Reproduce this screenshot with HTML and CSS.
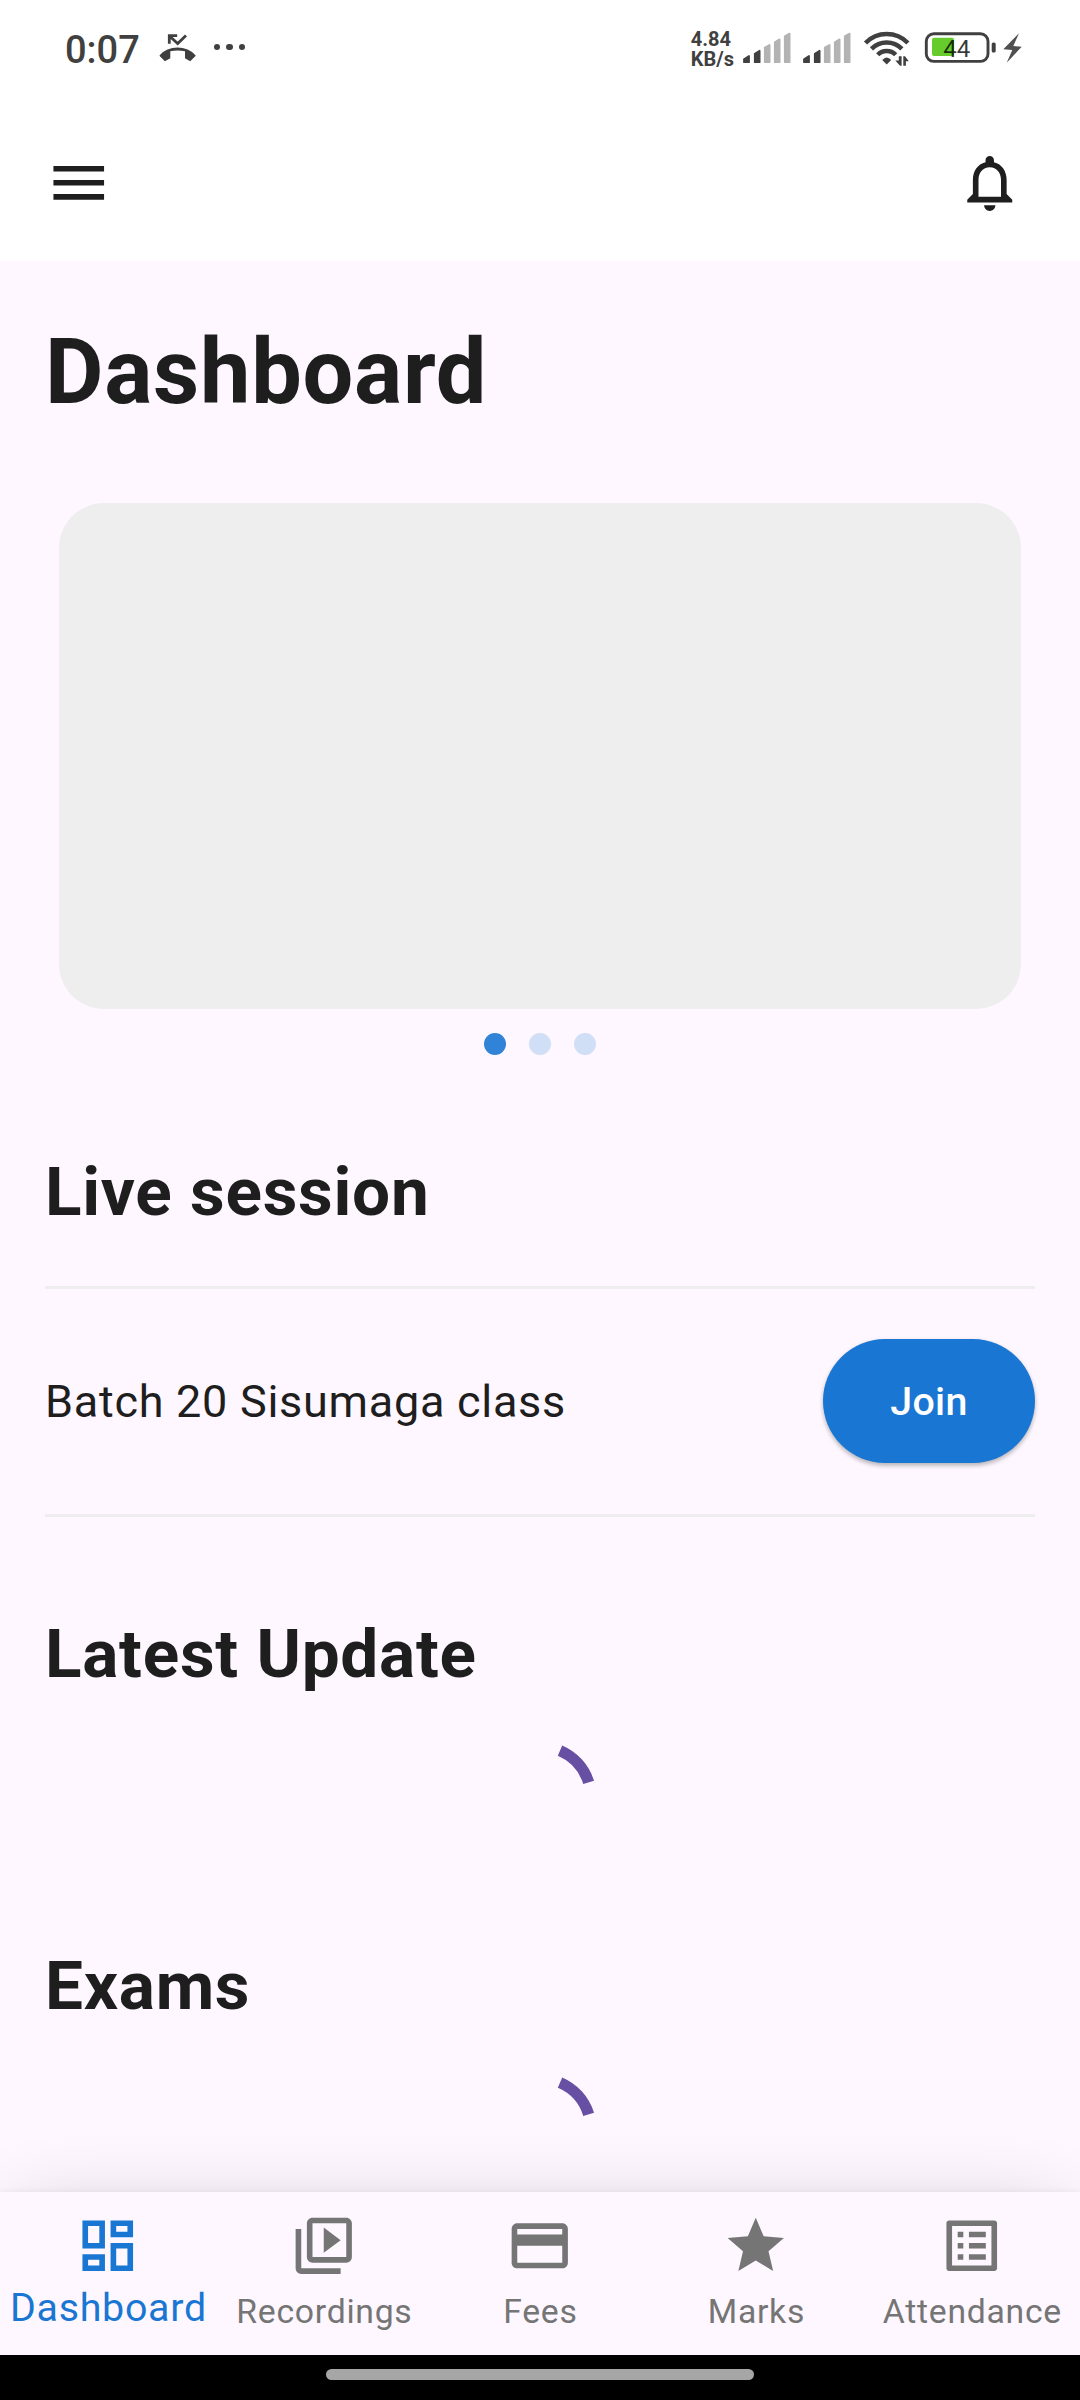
FILE: index.html
```
<!DOCTYPE html>
<html lang="en">
<head>
<meta charset="utf-8">
<title>Dashboard</title>
<link rel="stylesheet" href="styles.css">
</head>
<body>
<div class="screen">
  <header class="header">
    <div class="status">
      <span class="status-time">0:07</span>
      <svg class="status-call" viewBox="0 0 38 29" width="38" height="29"><path d="M.4 22.7C9 11.8 28 11.8 36.8 22.7L31.2 28.3L26 25.3V18.3Q18.5 16.6 11.3 18.3V25.3L5.9 28.3Z"/><path class="line" d="M10.3 10.7V2.7H18.2M11 3.4L18.7 10.6L27 2.5"/></svg>
      <span class="status-more"><i></i><i></i><i></i></span>
      <div class="status-right">
        <span class="status-speed">4.84<br>KB/s</span>
        <svg class="status-signal" viewBox="0 0 48 32" width="48" height="32"><g class="on"><path d="M1 27.2L6 24V30.2H1Z"/><path d="M11.8 21.7L16.6 18.8V30.2H11.8Z"/></g><g class="off"><path d="M21.8 15.6L26.6 13V30.2H21.8Z"/><path d="M31.8 10.2L36.6 7.4V30.2H31.8Z"/><path d="M41.8 4.4L46.6 1.6V30.2H41.8Z"/></g></svg>
        <svg class="status-signal" viewBox="0 0 48 32" width="48" height="32"><g class="on"><path d="M1 27.2L6 24V30.2H1Z"/><path d="M11.8 21.7L16.6 18.8V30.2H11.8Z"/></g><g class="off"><path d="M21.8 15.6L26.6 13V30.2H21.8Z"/><path d="M31.8 10.2L36.6 7.4V30.2H31.8Z"/><path d="M41.8 4.4L46.6 1.6V30.2H41.8Z"/></g></svg>
        <svg class="status-wifi" viewBox="0 0 48 37" width="48" height="37"><g class="arcs"><path d="M2.5 13A29.500 29.500 0 0 1 44.9 13"/><path d="M8.500 18.8A21.500 21.500 0 0 1 38.9 18.8"/><path d="M14.7 24.8A12.600 12.600 0 0 1 32.7 24.8"/></g><path d="M19.2 30Q23.7 24.8 28.2 30L23.7 34.6Z"/><path d="M32.3 30.5H35.8V26.2H38.6V35.8H37ZM40.3 26.2H42L45.8 31.2H42.9V35.8H40.3Z"/></svg>
        <svg class="status-battery" viewBox="0 0 72 35" width="72" height="35"><rect class="shell" x="2.3" y="3.8" width="61.7" height="27.6" rx="7.5"/><rect class="level" x="8" y="7.8" width="22" height="18.2" rx="2"/><rect class="tip" x="67.7" y="12.5" width="4" height="10" rx="1.6"/><text x="19.3" y="27">44</text></svg>
        <svg class="status-bolt" viewBox="0 0 19 30" width="19" height="30"><path d="M16 .3L.3 16.3L9.3 17L3.7 29.7L18.7 13.7L10.3 13Z"/></svg>
      </div>
    </div>
    <div class="appbar">
      <svg class="icon" viewBox="0 0 24 24"><path d="M3 18h18v-2H3v2zm0-5h18v-2H3v2zm0-7v2h18V6H3z"/></svg>
      <svg class="icon" viewBox="0 0 24 24"><path d="M12 22c1.1 0 2-.9 2-2h-4c0 1.1.9 2 2 2zm6-6v-5c0-3.07-1.63-5.64-4.5-6.32V4c0-.83-.67-1.5-1.5-1.5s-1.5.67-1.5 1.5v.68C7.64 5.36 6 7.92 6 11v5l-2 2v1h16v-1l-2-2zm-2 1H8v-6c0-2.48 1.51-4.5 4-4.5s4 2.02 4 4.5v6z"/></svg>
    </div>
  </header>

  <main class="content">
    <h1 class="page-title">Dashboard</h1>
    <div class="banner"></div>
    <div class="dots"><i class="dot active"></i><i class="dot"></i><i class="dot"></i></div>

    <section class="section">
      <h2 class="section-title">Live session</h2>
      <div class="session">
        <span class="session-name">Batch 20 Sisumaga class</span>
        <button class="join">Join</button>
      </div>
    </section>

    <section class="section">
      <h2 class="section-title">Latest Update</h2>
      <svg class="spinner" viewBox="0 0 112.5 112.5"><path d="M76.02 9.67A50.6 50.6 0 0 1 104.64 41.45"/></svg>
    </section>

    <section class="section exams">
      <h2 class="section-title">Exams</h2>
      <svg class="spinner" viewBox="0 0 112.5 112.5"><path d="M76.02 9.67A50.6 50.6 0 0 1 104.64 41.45"/></svg>
    </section>
  </main>

  <nav class="tabs">
    <a class="tab selected"><svg class="icon" viewBox="0 0 24 24"><path d="M19 5v2h-4V5h4M9 5v6H5V5h4m10 8v6h-4v-6h4M9 17v2H5v-2h4M21 3h-8v6h8V3zM11 3H3v10h8V3zm10 8h-8v10h8V11zm-10 4H3v6h8v-6z"/></svg><span class="label">Dashboard</span></a>
    <a class="tab"><svg class="icon" viewBox="0 0 24 24"><path d="M4 6H2v14c0 1.1.9 2 2 2h14v-2H4V6zm16-4H8c-1.1 0-2 .9-2 2v12c0 1.1.9 2 2 2h12c1.1 0 2-.9 2-2V4c0-1.1-.9-2-2-2zm0 14H8V4h12v12zM12 5.5v9l6-4.5z"/></svg><span class="label">Recordings</span></a>
    <a class="tab"><svg class="icon" viewBox="0 0 24 24"><path d="M20 4H4c-1.11 0-1.99.89-1.99 2L2 18c0 1.11.89 2 2 2h16c1.11 0 2-.89 2-2V6c0-1.11-.89-2-2-2zm0 14H4v-6h16v6zm0-10H4V6h16v2z"/></svg><span class="label">Fees</span></a>
    <a class="tab"><svg class="icon" viewBox="0 0 24 24"><path d="M12 17.27L18.18 21l-1.64-7.03L22 9.24l-7.19-.61L12 2 9.19 8.63 2 9.24l5.46 4.73L5.82 21z"/></svg><span class="label">Marks</span></a>
    <a class="tab"><svg class="icon" viewBox="0 0 24 24"><path d="M19 5v14H5V5h14m1.1-2H3.9c-.5 0-.9.4-.9.9v16.2c0 .4.4.9.9.9h16.2c.4 0 .9-.5.9-.9V3.9c0-.5-.5-.9-.9-.9zM11 7h6v2h-6V7zm0 4h6v2h-6v-2zm0 4h6v2h-6v-2zM7 7h2v2H7V7zm0 4h2v2H7v-2zm0 4h2v2H7v-2z"/></svg><span class="label">Attendance</span></a>
  </nav>
  <div class="gesture"><i class="handle"></i></div>
</div>
</body>
</html>
```
FILE: styles.css
```
* { box-sizing: border-box; }
body { margin: 0; font-family: Roboto, sans-serif; background: #fef7ff; }
svg { display: block; flex: none; }
h1, h2 { margin: 0; font-weight: 700; }

.screen { width: 1080px; height: 2400px; display: flex; flex-direction: column; overflow: hidden; color: #1e1e1e; }
.icon { width: 67.5px; height: 67.5px; fill: currentColor; }

.header { flex: none; height: 261px; background: #fff; }
.status { display: flex; align-items: flex-start; height: 105px; padding: 28px 58px 0 65px; color: #404040; fill: #404040; }
.status-time { width: 94px; font-size: 38px; line-height: 44px; font-weight: 500; }
.status-call { margin-top: 5px; }
.status-call .line { fill: none; stroke: #404040; stroke-width: 2.8; }
.status-more { display: flex; gap: 6.2px; margin: 15.9px 0 0 16.8px; }
.status-more i { width: 6.3px; height: 6.3px; border-radius: 50%; background: #404040; }
.status-right { display: flex; align-items: flex-start; margin-left: auto; }
.status-speed { width: 52.2px; margin-top: 1px; font-size: 20px; line-height: 20px; font-weight: 700; white-space: nowrap; }
.status-signal { margin: 4px 12px 0 0; stroke-width: 1.8; stroke-linejoin: round; }
.status-signal .on { fill: #404040; stroke: #404040; }
.status-signal .off { fill: #b3b3b3; stroke: #b3b3b3; }
.status-wifi { margin: 2px 13px 0 0; }
.status-wifi .arcs { fill: none; stroke: #404040; stroke-width: 4.5; }
.status-battery { margin: 2px 7px 0 0; }
.status-battery .shell { fill: none; stroke: #404040; stroke-width: 2.9; }
.status-battery .level { fill: #66cc2b; }
.status-battery text { font-size: 24px; fill: rgba(0, 0, 0, .78); }
.status-bolt { margin-top: 5px; fill: #505050; }

.appbar { display: flex; align-items: center; justify-content: space-between; height: 156px; padding: 0 56.25px 0 45px; }

.content { flex: none; height: 1931px; padding: 61px 45px 0; overflow: hidden; }
.page-title { font-size: 90px; line-height: 101px; letter-spacing: .72px; }
.banner { height: 506px; margin: 80px 14px 0; border-radius: 45px; background: #eee; }
.dots { display: flex; justify-content: center; gap: 22.5px; height: 46px; padding-top: 23.5px; }
.dot { width: 22.5px; height: 22.5px; border-radius: 50%; background: #d0dff6; }
.dot.active { background: #3083d7; }

.section { padding-top: 97px; }
.section-title { font-size: 67.5px; line-height: 79px; letter-spacing: .74px; }
.session { display: flex; align-items: center; justify-content: space-between; height: 231px; margin-top: 55px; padding: 50px 0 51px; border: solid #eee; border-width: 3px 0; }
.session-name { font-size: 45px; line-height: 53px; letter-spacing: .72px; }
.join { width: 212px; height: 124px; padding: 0; border: 0; border-radius: 62px; background: #1976d2; color: #fff; font: 500 39.375px/47px Roboto, sans-serif; letter-spacing: .28px; box-shadow: 0 3px 4px rgba(0, 0, 0, .22), 0 1px 5px rgba(0, 0, 0, .08); }
.spinner { width: 112.5px; height: 112.5px; margin: 48.4px auto 0; fill: none; stroke: #6750a4; stroke-width: 11.25; }
.exams { padding-top: 92.1px; }

.tabs { flex: none; position: relative; display: flex; height: 163px; padding-top: 19.5px; background: #fef7ff; box-shadow: 0 0 76px -14px rgba(0, 0, 0, .16), 0 -1px 5px rgba(0, 0, 0, .05); }
.tab { display: flex; flex-direction: column; align-items: center; width: 216px; color: #757575; }
.label { margin-top: 13px; padding-left: .8px; font-size: 33.75px; line-height: 39px; letter-spacing: .72px; }
.tab.selected { color: #1976d2; }
.selected .label { margin-top: 5px; font-size: 39.375px; line-height: 47px; }

.gesture { flex: none; position: relative; display: flex; justify-content: center; height: 45px; padding-top: 13.5px; background: #000; }
.handle { width: 428px; height: 11px; border-radius: 5.5px; background: #a6a6a6; }
```
